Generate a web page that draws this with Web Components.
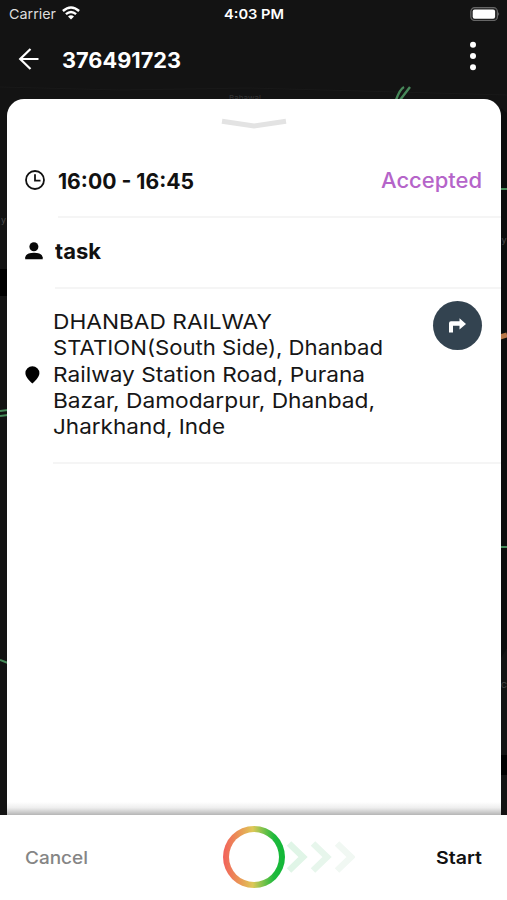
<!DOCTYPE html>
<html lang="en">
<head>
<meta charset="utf-8">
<title>Task details</title>
<style>
html,body{margin:0;height:100%;background:#131313;overflow:hidden}
body{font-family:Inter,"Liberation Sans",sans-serif;color:#111}
</style>
</head>
<body>
<task-screen></task-screen>
<script>
const define = (name, html, setup) => customElements.define(name, class extends HTMLElement {
  connectedCallback() {
    if (this.shadowRoot) return;
    const t = document.createElement('template');
    t.innerHTML = html;
    this.attachShadow({mode: 'open'}).append(t.content.cloneNode(true));
    if (setup) setup(this, this.shadowRoot);
  }
});

// A single line of text stretched horizontally to the width attribute.
define('fit-text', `<style>
:host{display:block;white-space:nowrap;line-height:26.2px}
span{display:inline-block;transform-origin:0 50%}
</style><span><slot></slot></span>`, (el, root) => {
  const w = +el.getAttribute('width'), s = root.querySelector('span');
  el.style.width = w + 'px';
  s.style.transform = `scaleX(${w / s.getBoundingClientRect().width})`;
});

define('map-backdrop', `<style>
:host{display:block;position:absolute;inset:0}
svg{display:block}
text{font:9px Inter,sans-serif;fill:#4a4a4a}
</style>
<svg width="507" height="900" fill="none">
<rect width="507" height="900" fill="#131313"/>
<rect y="269" width="8" height="27" fill="#000"/>
<path d="M501 108l6 5v535l-6 10z" fill="#0c0d0d"/><path d="M500 755h7v20h-7z" fill="#000"/>
<path d="M0 87l120 3 130-2 257 7" stroke="#191919"/>
<path d="M396 100q4-11 8-13M400 100l10-13" stroke="#47885a" stroke-width="2.4"/>
<path d="M0 411l8-1M0 416l8-1M0 660l8 3M500 189h7M500 547h7" stroke="#478b5a" stroke-width="2"/>
<path d="M500 337l7-2" stroke="#b97748" stroke-width="5"/>
<text x="229" y="101" style="font-size:8px;fill:#343434">Bahawal</text>
<text x="1" y="223">y</text><text x="501.500" y="243">y</text><text x="501" y="688" style="font-size:8px">C</text>
</svg>`);

define('status-bar', `<style>
:host{display:flex;justify-content:space-between;align-items:center;height:28px;padding:0 8px 0 8px;color:#fff;box-sizing:border-box}
.l{display:flex;gap:6px;align-items:center;width:215px;padding-left:1px;box-sizing:border-box}
.carrier{font-size:13.6px;color:#ddd}.time{font-size:13.4px;font-weight:600}
.r{width:215px;display:flex;justify-content:flex-end}svg{display:block}
.r svg{margin-right:-1px}
</style>
<div class="l"><fit-text class="carrier" width="47">Carrier</fit-text>
<svg style="margin-top:-2px" width="18" height="14" viewBox="0 0 18 14" fill="none" stroke="#fff" stroke-width="2.4"><path d="M.9 5Q9-2.200 17.100 5M3.900 8.200Q9 3.800 14.100 8.200"/><path d="M9 13.600l-3-3.200Q9 8.200 12 10.400z" fill="#fff" stroke="none"/></svg></div>
<fit-text class="time" width="60">4:03 PM</fit-text>
<div class="r"><svg style="margin-top:-1px" width="30" height="14" viewBox="0 0 30 14"><rect x=".8" y=".7" width="26.600" height="12.800" rx="3.800" fill="#222" stroke="#666" stroke-width="1.200"/><rect x="2.700" y="2.500" width="22.400" height="9.200" rx="2" fill="#fff"/><path d="M28.400 5q1.600 2 0 4z" fill="#888"/></svg></div>`);

define('title-bar', `<style>
:host{display:flex;align-items:center;height:57px;padding:3px 30px 0 18px;box-sizing:border-box;color:#fff}
fit-text{font-size:21.500px;font-weight:700;margin-left:23px;margin-top:4px}
.back{margin-top:2px}.more{margin:-4px 0 0 auto}svg{display:block}
</style>
<svg class="back" width="21" height="22" viewBox="0 0 21 22" fill="none" stroke="#fff" stroke-width="2.200"><path d="M12.500 1L2.200 11l10.300 10M2.200 11h18.300"/></svg>
<fit-text width="119">376491723</fit-text>
<svg class="more" width="8" height="30" viewBox="0 0 8 30" fill="#fff"><circle cx="4" cy="3.800" r="3"/><circle cx="4" cy="15" r="3"/><circle cx="4" cy="26.200" r="3"/></svg>`);

// One row of the sheet: icon, content, trailing item, inset divider.
define('sheet-row', `<style>
:host{display:grid;grid-template-columns:var(--inset,47px) 1fr auto;position:relative;padding-right:19px;box-sizing:border-box;align-items:center}
:host::after{content:"";grid-column:2/4;margin-right:-19px;height:1.500px;background:#f5f5f5;align-self:end}
.icon{padding-left:18px}
</style><div class="icon"><slot name="icon"></slot></div><div><slot></slot></div><slot name="end"></slot>`);

define('task-sheet', `<style>
:host{display:flex;flex-direction:column;flex:1;margin:0 6.500px 0 7px;background:#fff;border-radius:17px 17px 0 0;position:relative;overflow:hidden}
:host::after{content:"";margin-top:auto;height:13px;background:linear-gradient(#fff,#eee 45%,#b5b5b5)}
.handle{display:block;margin:19px auto 0;flex:none}
svg{display:block}
sheet-row{grid-template-rows:1fr 1.500px}
.time{height:84px;margin-top:4px;--inset:51px}
.who{height:71px;--inset:48px}
.addr{height:175px;--inset:46px}
.b{font-weight:700;font-size:21.400px}
.time .b{margin-top:12px}.time .st{margin-top:12px}
.who .b,.who svg{margin-top:-2px}
.st{color:#b564c9;font-size:20.800px;font-weight:500}
.a{font-size:20.500px;color:#161616;margin-left:-.500px;margin-top:-1px}
.go{width:49px;height:49px;border-radius:50%;background:#334350;display:grid;place-items:center;align-self:start;margin-top:12.500px;margin-right:-.500px}
</style>
<svg class="handle" width="66" height="12" viewBox="0 0 66 12" fill="none" stroke="#e3e3e3" stroke-width="5"><path d="M1 3.200L33 8 65 3.200"/></svg>
<sheet-row class="time"><svg slot="icon" style="margin-top:11px" width="20" height="20" viewBox="0 0 20 20" fill="none" stroke="#111" stroke-width="1.800"><circle cx="10" cy="10" r="9"/><path d="M10 4.200v6.500h5.500"/></svg>
<fit-text class="b" width="136">16:00 - 16:45</fit-text><fit-text slot="end" class="st" width="101">Accepted</fit-text></sheet-row>
<sheet-row class="who"><svg slot="icon" width="18" height="18" viewBox="0 0 18 18" fill="#080808"><circle cx="8.900" cy="4.700" r="4.500"/><path d="M.2 17.200v-2Q1.500 10.700 9 10.700T17.700 15.200v2z"/></svg>
<fit-text class="b" width="46">task</fit-text></sheet-row>
<sheet-row class="addr"><svg slot="icon" style="margin-top:-1px" width="15" height="18" viewBox="0 0 15 18"><path d="M7.400 17.600C5.500 15.300.4 11.500.4 7.200a7 7 0 0114 0c0 4.300-5.100 8.100-7 10.400z" fill="#000"/></svg>
<div class="a"><fit-text width="219">DHANBAD RAILWAY</fit-text><fit-text width="330">STATION(South Side), Dhanbad</fit-text><fit-text width="312">Railway Station Road, Purana</fit-text><fit-text width="322">Bazar, Damodarpur, Dhanbad,</fit-text><fit-text width="172">Jharkhand, Inde</fit-text></div>
<div slot="end" class="go"><svg width="19" height="16" viewBox="0 0 19 16" fill="#fff"><path d="M1 14.500V5.200Q1 3.200 3 3.200h8.500V.2L18 6l-6.500 5.600V7.800H5v6.700z"/></svg></div></sheet-row>`);

define('action-bar', `<style>
:host{display:grid;grid-template-columns:198px 1fr auto;align-items:center;height:85.500px;flex:none;background:#fff;padding:1px 25px 0;box-sizing:border-box;position:relative}
fit-text{font-size:17.600px;font-weight:500}
.c{color:#858585}.s{font-weight:600;color:#111}
.ring{width:62px;height:62px;border-radius:50%;background:linear-gradient(90deg,#f2605b,#e99a56 28%,#dec858 48%,#7bc24c 65%,#1fba3d 82%,#10b737);display:grid;place-items:center}
.ring::before{content:"";width:50px;height:50px;border-radius:50%;background:#fff}
.slider{display:flex;align-items:center;gap:1px;margin-top:-2px}
</style>
<fit-text class="c" width="63">Cancel</fit-text>
<div class="slider"><div class="ring"></div><svg width="69" height="34" viewBox="0 0 69 34" fill="none" stroke-width="6.500"><path d="M3 3.500l14 13.500L3 30.500" stroke="#e0f5e7"/><path d="M27 3.500l14 13.500-14 13.500" stroke="#e7f6ec"/><path d="M51 3.500l14 13.500-14 13.500" stroke="#f1f8f3"/></svg></div>
<fit-text class="s" width="46">Start</fit-text>`);

define('task-screen', `<style>
:host{display:flex;flex-direction:column;width:507px;height:900px;position:relative;overflow:hidden}
status-bar,title-bar{background:#131313;position:relative}
title-bar{margin-bottom:13.500px}
</style><map-backdrop></map-backdrop><status-bar></status-bar><title-bar></title-bar><task-sheet></task-sheet><action-bar></action-bar>`);
</script>
</body>
</html>
